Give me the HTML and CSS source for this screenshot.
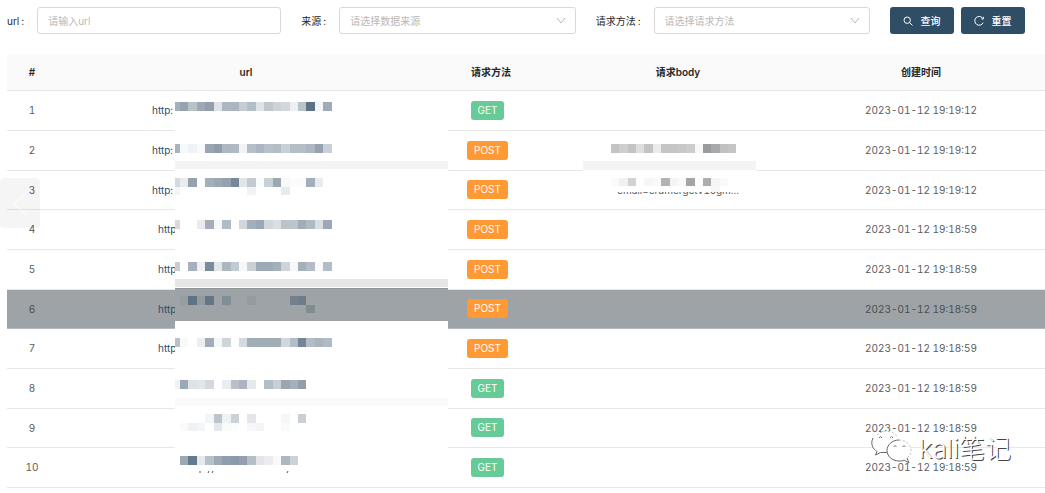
FILE: index.html
```html
<!DOCTYPE html>
<html lang="zh-CN">
<head>
<meta charset="utf-8">
<title>请求记录</title>
<link rel="stylesheet" href="styles.css">
</head>
<body>
<form class="filters">
  <div class="field">
    <label for="f-url">url</label>
    <input id="f-url" class="control" type="text" placeholder="请输入url">
  </div>
  <div class="field">
    <label for="f-source">来源</label>
    <div class="select-wrap">
      <select id="f-source" class="control"><option>请选择数据来源</option></select>
      <svg class="caret" viewBox="0 0 10 8"><path d="M1 1l4 5 4-5"/></svg>
    </div>
  </div>
  <div class="field">
    <label for="f-method">请求方法</label>
    <div class="select-wrap">
      <select id="f-method" class="control"><option>请选择请求方法</option></select>
      <svg class="caret" viewBox="0 0 10 8"><path d="M1 1l4 5 4-5"/></svg>
    </div>
  </div>
  <div class="actions">
    <button type="button" class="btn"><svg viewBox="0 0 10 10"><circle cx="4.2" cy="4.2" r="3.2"/><path d="M6.6 6.600L9.500 9.500"/></svg>查询</button>
    <button type="button" class="btn"><svg viewBox="0 0 10 10"><path d="M8.9 2.500A4.400 4.400 0 1 0 9.200 6.600M9.300 .8v2.200H7.400"/></svg>重置</button>
  </div>
</form>
<div class="table-wrap">
  <table class="records">
    <colgroup><col class="c-index"><col class="c-url"><col class="c-method"><col class="c-body"><col class="c-time"></colgroup>
    <thead>
      <tr><th>#</th><th>url</th><th>请求方法</th><th>请求body</th><th class="time">创建时间</th></tr>
    </thead>
    <tbody>
      <tr><td>1</td><td class="url"><a href="#">http:</a></td><td><span class="tag get">GET</span></td><td></td><td class="time">2023-01-12 19:19:12</td></tr>
      <tr><td>2</td><td class="url"><a href="#">http:</a></td><td><span class="tag post">POST</span></td><td></td><td class="time">2023-01-12 19:19:12</td></tr>
      <tr><td>3</td><td class="url"><a href="#">http:</a></td><td><span class="tag post">POST</span></td><td>email=erdmergetv1ogm...</td><td class="time">2023-01-12 19:19:12</td></tr>
      <tr><td>4</td><td class="url long"><a href="#">http</a></td><td><span class="tag post">POST</span></td><td></td><td class="time">2023-01-12 19:18:59</td></tr>
      <tr><td>5</td><td class="url long"><a href="#">http</a></td><td><span class="tag post">POST</span></td><td></td><td class="time">2023-01-12 19:18:59</td></tr>
      <tr class="active"><td>6</td><td class="url long"><a href="#">http</a></td><td><span class="tag post">POST</span></td><td></td><td class="time">2023-01-12 19:18:59</td></tr>
      <tr><td>7</td><td class="url long"><a href="#">http</a></td><td><span class="tag post">POST</span></td><td></td><td class="time">2023-01-12 19:18:59</td></tr>
      <tr><td>8</td><td></td><td><span class="tag get">GET</span></td><td></td><td class="time">2023-01-12 19:18:59</td></tr>
      <tr><td>9</td><td></td><td><span class="tag get">GET</span></td><td></td><td class="time">2023-01-12 19:18:59</td></tr>
      <tr><td>10</td><td></td><td><span class="tag get">GET</span></td><td></td><td class="time">2023-01-12 19:18:59</td></tr>
    </tbody>
  </table>
  <svg class="mask mask-url" viewBox="0 0 273 380">
    <path fill="#fff" d="M0 0h273v380H0z"/>
    <path fill="#f4f4f4" d="M0 67h273v8H0z"/>
    <path fill="#e5e7e7" d="M0 185h273v8H0z"/>
    <path fill="#9da3a7" d="M0 194h273v33H0z"/>
    <path fill="#8f9599" d="M0 194h273v1H0z"/>
    <path fill="#f9f9f9" d="M0 304h273v8H0z"/>
    <g id="url-cells" transform="translate(5 8.3) scale(8.43)"></g>
    <path stroke="#3f5a75" stroke-width="1" d="M25 377v2M34 377l-1 2M38 377l-1 2M113 377l-1 2"/>
  </svg>
  <svg class="mask mask-body" viewBox="0 0 173 52">
    <path fill="#fff" d="M0 0h173v52H0z"/>
    <path fill="#f4f4f4" d="M0 21h173v9H0z"/>
    <g id="body-cells" transform="translate(28 4.3) scale(8.36 8.43)"></g>
  </svg>
</div>
<button type="button" class="prev" aria-label="上一张"><svg viewBox="0 0 40 50"><path d="M27 14L14 26l13 12"/></svg></button>
<div class="watermark">
  <svg viewBox="0 0 42 38">
    <path class="bubble" d="M15 1C7 1 1 6 1 12.500c0 4 2 7 5 9L5 25l5-2c2 1 4 1 6 1 1-7 6-11 13-12C28 5 22 1 15 1z"/>
    <path class="faint" d="M6 5C10 0 21-1 27 7"/>
    <path class="edge" d="M2 8c-3 6 0 11 4 13.500L4.500 25l5-2.500h7"/>
    <path class="bubble" d="M28 10c-7 0-12 5-12 10.500S21 31 28 31c2 0 4 0 5-1l5 3-2-5c3-2 4-4 4-7.500C40 15 35 10 28 10z"/>
    <path class="edge" d="M28 10c-7 0-12 5-12 10.500S21 31 28 31c2 0 4 0 5-1l5 3-2-5"/>
    <path class="faint" d="M28 10c7 0 12 5 12 10.500 0 3-1 5-4 7.500"/>
    <path class="eye" d="M8 8q1.500-3 3 0M19 8q1.500-3 3 0M22.500 17q1.500-3 3 0M31.500 17q1.500-3 3 0"/>
  </svg>
  <span>kali笔记</span>
</div>
<script src="mosaic.js"></script>
</body>
</html>
```
FILE: styles.css
```css
* { box-sizing: border-box; }
body {
  margin: 0;
  position: relative;
  padding: 7px 0 6px 7px;
  background: #fff;
  color: #595b5e;
  font: 10px/14px Inter, "Noto Sans CJK SC", sans-serif;
}
button, input, select { font: inherit; }
.filters { display: flex; gap: 20px; padding-right: 20px; }
.field { flex: 1; display: flex; align-items: center; min-width: 0; }
.field label { color: #262626; white-space: nowrap; }
.field label::after { content: ":"; margin: 0 13px 0 2px; }
.control {
  flex: 1;
  width: 100%;
  min-width: 0;
  height: 27px;
  padding: 0 10px;
  border: 1px solid #d9d9d9;
  border-radius: 3px;
  background: #fff;
  color: #b8b8b8;
  appearance: none;
}
.control::placeholder { color: #b8b8b8; }
.select-wrap { position: relative; display: flex; flex: 1; min-width: 0; }
.caret {
  position: absolute;
  right: 10px;
  top: 10px;
  width: 10px;
  height: 8px;
  fill: none;
  stroke: #b8b8b8;
  pointer-events: none;
}
.actions { display: flex; gap: 7px; }
.btn {
  display: flex;
  align-items: center;
  justify-content: center;
  gap: 7px;
  width: 64px;
  height: 27px;
  padding: 0;
  border: 0;
  border-radius: 3px;
  background: #304d66;
  color: #fff;
  font-weight: 500;
}
.btn svg { width: 10px; height: 10px; fill: none; stroke: #fff; }
.table-wrap { position: relative; margin-top: 20px; }
.records { width: 100%; table-layout: fixed; border-collapse: separate; border-spacing: 0; }
.c-index { width: 50px; }
.c-url { width: 378px; }
.c-method { width: 112px; }
.c-body { width: 262px; }
th, td { padding: 0; text-align: center; border-bottom: 1px solid #e8e8e8; }
th { height: 37px; background: #fafafa; color: #262626; font-weight: 600; }
td { height: 40px; padding-bottom: 1px; font-variant-numeric: tabular-nums; }
tr:nth-child(3n) td { height: 39px; }
.records .time { padding-right: 12px; }
.records .url { padding-left: 95px; text-align: left; }
.records .long { padding-left: 101px; }
.url a { color: #304d66; text-decoration: none; }
.active td { background: #9da3a7; border-color: #b5babd; color: #4b4e52; }
.tag {
  display: inline-block;
  margin-right: 7px;
  padding: 0 7px;
  border-radius: 3px;
  line-height: 19px;
  color: #fff;
  vertical-align: middle;
}
.get { background: #67cb98; }
.post { background: #ff9933; }
.mask { position: absolute; }
.mask-url { left: 168px; top: 40px; width: 273px; height: 380px; }
.mask-body { left: 576px; top: 86px; width: 173px; height: 52px; }
.prev {
  position: absolute;
  left: 0;
  top: 178px;
  width: 40px;
  height: 50px;
  padding: 0;
  border: 0;
  border-radius: 4px;
  background: rgba(0, 0, 0, 0.04);
}
.prev svg { display: block; fill: none; stroke: #fff; }
.watermark {
  position: absolute;
  right: 34px;
  bottom: 26px;
  display: flex;
  align-items: center;
  gap: 6px;
  color: #fff;
  font-size: 26px;
  line-height: 26px;
  font-weight: 300;
  text-shadow: 1px 1px 0 #444;
}
.watermark svg { width: 42px; height: 38px; fill: none; overflow: visible; }
.bubble { fill: #fff; }
.edge { stroke: #666; }
.faint { stroke: #bbb; stroke-dasharray: 2 2; }
.eye { stroke: #777; }
```
FILE: mosaic.js
```js
// Each row: [grid row, "column:colour ..."]
const urlRows = [
  [0, "0:a5b0bb 1:95a2b0 2:b8c2c7 3:9da9b5 4:929fab 5:dfe2e7 6:adb7c1 7:aab5bf 8:c6cdd2 9:b4bec8 10:dee3e7 11:c0c8cd 12:cdd3d8 13:d3d8dc 14:eef0f3 15:b9c3cb 16:5d7285 17:f3f5f8 18:a0abb8"],
  [5, "0:a9b3be 1:f6f9fa 2:f0f3f5 3:f8f9fb 4:9aa5b3 5:8f9cab 6:adb8c2 7:b1bac3 8:f1f3f6 9:b5bfc8 10:adb5c2 11:b8c1c9 12:b3bdc6 13:c8d0d6 14:b4bec7 15:b4bec7 16:adb7c1 17:97a2b1 18:c8d0d7"],
  [9, "0:d3dade 1:eaedee 2:94a2af 4:a3afb9 5:9ca8b3 6:95a1af 7:77879a 8:e1e5e8 9:c5cad0 10:fafbfb 11:c9d1d8 12:9ba8b2 13:f8fafa 14:fcfcfc 15:fafbfb 16:a2aebb 17:e8ecef"],
  [10, "0:f4f5f6 9:f2f4f4 13:e6ecec"],
  [14, "0:d5dade 3:e9ebed 4:a4adba 5:f5f7f9 6:b1bac5 8:d0d6db 9:a3afbb 10:9aa8b3 11:d1d8db 12:dbdfe2 13:b9c3c9 14:bcc5ca 15:a3adba 16:b0bac5 17:d9dee2 18:9ca8b5"],
  [19, "0:c5ccd3 2:a7b1bd 3:eef0f2 4:7b8b9c 5:e3e6e9 6:adb7bd 7:c3cad1 8:f6f7f9 9:c9d1d6 10:9da9b6 11:9da9b5 12:a3afb9 13:cfd3da 14:f6f8f9 15:a3afba 16:b4bdc7 17:f9fafb 18:b3bcc8"],
  [23, "1:969ca0 2:5f7286 3:949b9f 4:647686 6:828e95 9:959b9f 14:74818d 15:6f7d8a"],
  [24, "16:808c92"],
  [28, "0:b9c2ca 1:f8faf9 3:eceff0 4:a2acb9 5:f4f7f8 6:ced5d9 8:d4dade 9:a1adb5 10:a1adb5 11:a1adb5 12:a1adb5 13:d1d8dd 14:b3bdc7 15:748598 16:b3bcc5 17:a9b4bd 18:b1bbc5"],
  [33, "0:f0f2f3 1:9ba7b5 2:dde2e5 3:e2e6ea 4:d4d8df 6:eaecef 7:bac0ca 8:adb4c0 9:e5e9eb 11:b3bcc7 12:c9cfd6 13:9aa5b1 14:a6afba 15:919fab"],
  [37, "4:f4f5f6 5:bcc4cc 6:f0f3f3 7:ccd3d8 9:e4e6ea 13:f5f7f7 15:c9cfd3"],
  [38, "1:f9fafa 2:eff2f4 3:f3f5f6 5:e4e6ec 6:f9fbfb 7:fafdfc 9:f8f8fa 10:f5f5f7 13:f9fbfb"],
  [42, "1:9ca8b3 2:647a8d 3:e5e9ec 4:b7c1ca 5:9da9b4 6:8f9ead 7:8b9aaa 8:939fae 9:b5bec6 10:e3e5ea 11:ebecf0 12:f7f9fb 13:adb8c1 14:ccd3d8"]
];
const bodyRows = [
  [0, "1:c3c4c4 2:cdcecf 3:c3c3c3 4:dddedf 5:c3c3c5 6:ebebeb 7:c5c5c6 8:c6c6c6 9:c8c8c8 10:cdcdcd 11:f8f8f8 12:999b9c 13:a7a9aa 14:c1c1c1 15:c5c5c5"],
  [4, "1:fafafa 2:f0f0f0 3:d2d2d0 5:f6f6f6 6:f9f9f9 7:b3b3b3 8:f4f4f6 9:f9f9f9 10:a5a5a5 12:adadad 13:f5f5f5 14:f9f9f9"],
  [5, "13:f8f8f8"]
];
function drawCells(id, rows) {
  const group = document.getElementById(id);
  for (const [y, cells] of rows) {
    for (const cell of cells.split(" ")) {
      const [col, colour] = cell.split(":");
      const rect = document.createElementNS("http://www.w3.org/2000/svg", "rect");
      rect.setAttribute("x", col - 1);
      rect.setAttribute("y", y);
      rect.setAttribute("width", 1);
      rect.setAttribute("height", 1);
      rect.setAttribute("fill", "#" + colour);
      rect.setAttribute("shape-rendering", "crispEdges");
      group.append(rect);
    }
  }
}
drawCells("url-cells", urlRows);
drawCells("body-cells", bodyRows);
```
